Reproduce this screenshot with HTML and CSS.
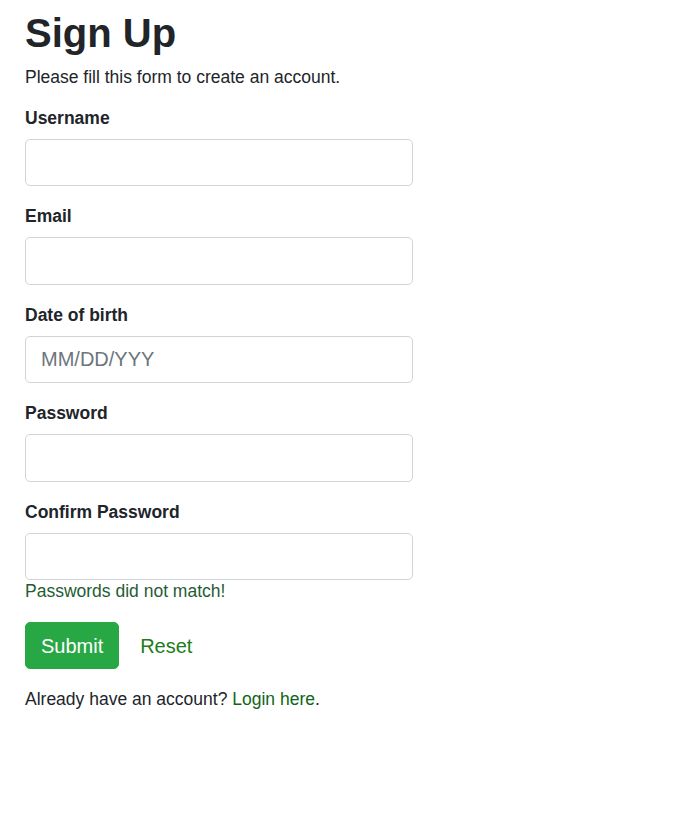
FILE: index.html
```html
<!DOCTYPE html>
<html lang="en">
<head>
<meta charset="utf-8">
<title>Sign Up</title>
<link rel="stylesheet" href="styles.css">
</head>
<body>
<div class="wrapper">
  <h2 class="title">Sign Up</h2>
  <p class="intro">Please fill this form to create an account.</p>
  <form class="form">
    <div class="group">
      <label class="label">Username</label>
      <input class="control" type="text">
    </div>
    <div class="group">
      <label class="label">Email</label>
      <input class="control" type="text">
    </div>
    <div class="group">
      <label class="label">Date of birth</label>
      <input class="control" type="text" placeholder="MM/DD/YYY">
    </div>
    <div class="group">
      <label class="label">Password</label>
      <input class="control" type="password">
    </div>
    <div class="group">
      <label class="label">Confirm Password</label>
      <input class="control" type="password">
      <span class="feedback">Passwords did not match!</span>
    </div>
    <div class="group actions">
      <button class="btn btn-submit" type="button">Submit</button>
      <button class="btn btn-link" type="button">Reset</button>
    </div>
    <p class="login">Already have an account? <a class="login-link" href="#">Login here</a>.</p>
  </form>
</div>
</body>
</html>
```

FILE: styles.css
```css
* { box-sizing: border-box; }

body {
  margin: 0;
  background: #fff;
  color: #212529;
  font-family: "Liberation Sans", Arial, sans-serif;
  font-size: 17.5px;
  line-height: 21px;
}

.wrapper {
  width: 437.5px;
  padding: 8.5px 25px 25px;
}

.title {
  margin: 0 0 10.5px;
  font-size: 40px;
  line-height: 48px;
  font-weight: 700;
}

.intro {
  margin: 0 0 19.5px;
}

.form { margin: 0; }

.group {
  margin-bottom: 20px;
}

.label {
  display: block;
  margin-bottom: 10px;
  font-weight: 700;
  line-height: 21px;
}

.control {
  display: block;
  width: 100%;
  height: 47.5px;
  padding: 7.5px 15px;
  font-family: "Liberation Sans", Arial, sans-serif;
  font-size: 20px;
  line-height: 30px;
  color: #495057;
  background: #fff;
  border: 1.25px solid #ced4da;
  border-radius: 5px;
  outline: none;
}

.control::placeholder {
  color: #6c757d;
  opacity: 1;
}

.feedback {
  display: block;
  margin-top: 1px;
  color: #1f5c35;
  line-height: 21px;
}

.actions {
  display: flex;
  align-items: center;
  gap: 4.9px;
}

.btn {
  display: inline-block;
  height: 47px;
  padding: 7.5px 15px;
  font-family: "Liberation Sans", Arial, sans-serif;
  font-size: 20px;
  line-height: 30px;
  border: 1.25px solid transparent;
  border-radius: 5px;
  cursor: pointer;
}

.btn-submit {
  color: #fff;
  background: #28a745;
  border-color: #28a745;
}

.btn-link {
  color: #1a7d1a;
  background: transparent;
}

.login {
  margin: 0;
}

.login-link {
  color: #0f6516;
  text-decoration: none;
}
```
